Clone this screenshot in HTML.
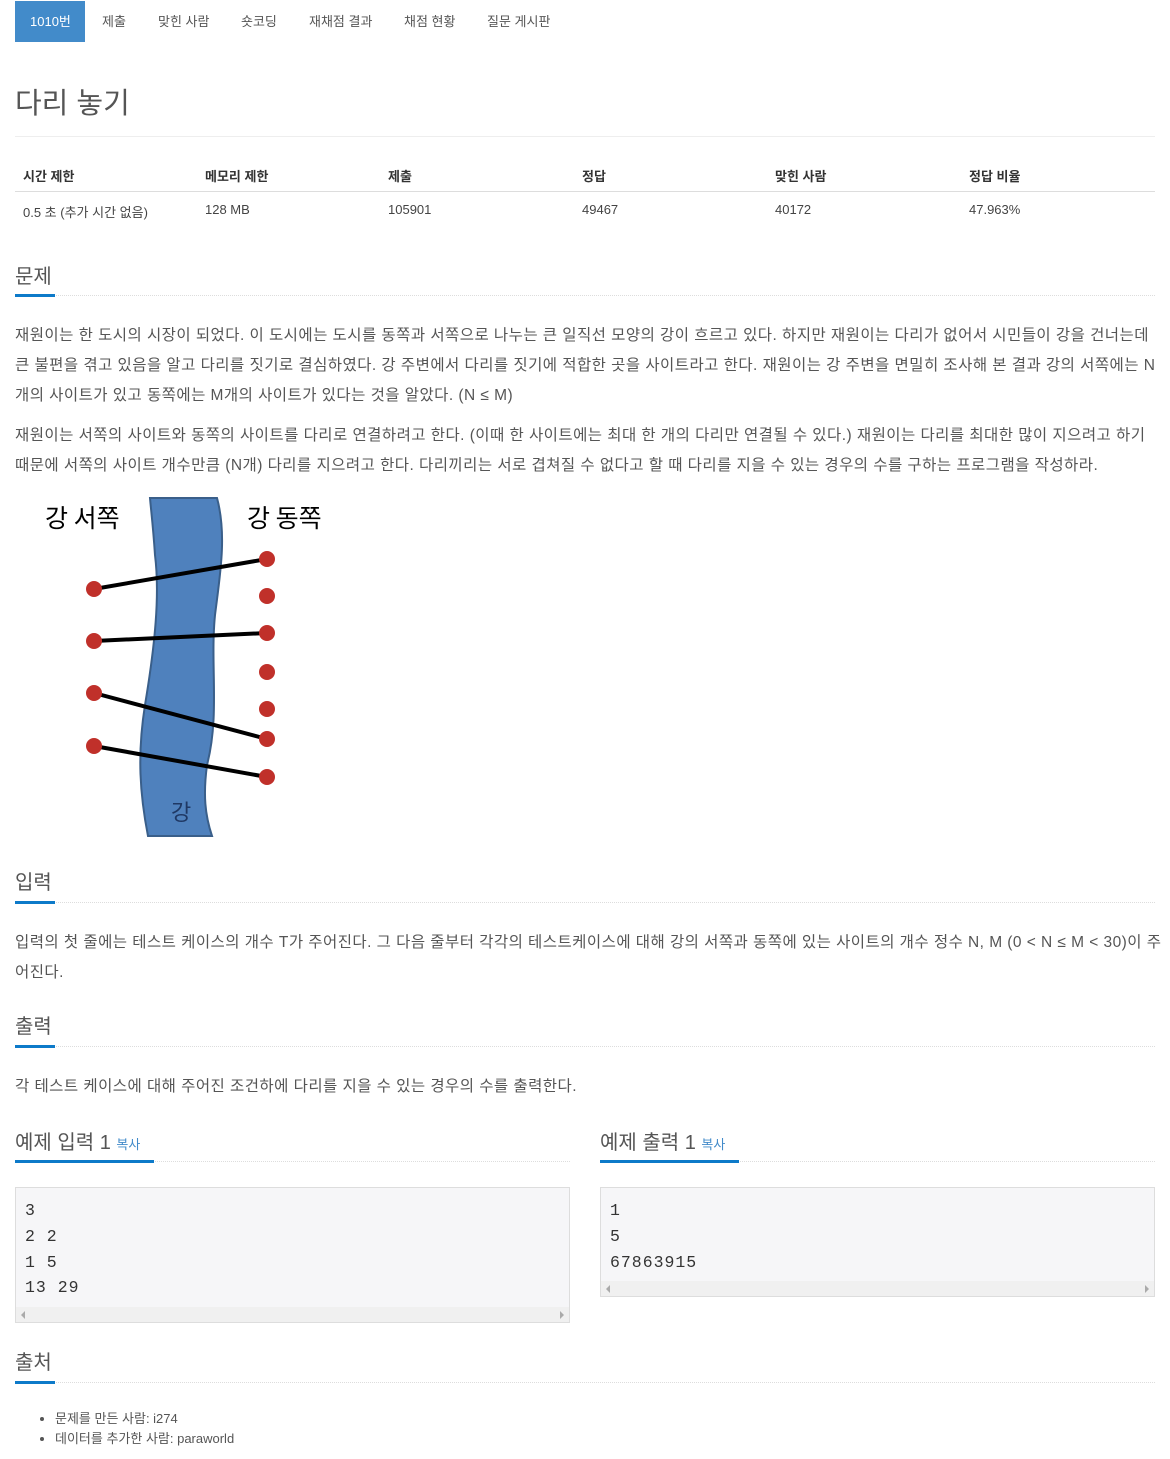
<!DOCTYPE html>
<html><head><meta charset="utf-8"><style>
*{margin:0;padding:0;box-sizing:border-box}
body{width:1170px;height:1459px;background:#fff;font-family:"Liberation Sans","Noto Sans CJK KR",sans-serif;color:#333;position:relative;overflow:hidden}
.a{position:absolute}
.nav span{position:absolute;top:11px;font-size:13px;color:#555}
.h2{font-size:20px;color:#555}
.uline{position:absolute;height:3px;background:#0d7ac9}
.dot{position:absolute;left:15px;right:15px;border-top:1px dotted #ddd}
p.t{position:absolute;left:15px;width:1145px;font-size:15.5px;line-height:30px;color:#555;letter-spacing:0.45px}
.th{font-size:13px;font-weight:bold;color:#333;position:absolute;top:166px}
.td{font-size:13px;color:#444;position:absolute;top:202px}
pre{position:absolute;background:#f6f6f8;border:1px solid #ddd;font-family:"Liberation Mono","DejaVu Sans Mono",monospace;font-size:16.5px;line-height:25.8px;color:#333;padding:10px 9px;letter-spacing:1px}
.sb{position:absolute;left:0;right:0;bottom:0;height:15px;background:#f0f0f0}
.sb:before{content:"";position:absolute;left:5px;top:4px;border-right:4px solid #aaa;border-top:4px solid transparent;border-bottom:4px solid transparent}
.sb:after{content:"";position:absolute;right:5px;top:4px;border-left:4px solid #aaa;border-top:4px solid transparent;border-bottom:4px solid transparent}
</style></head><body>
<div class="a" style="left:15px;top:1px;width:70px;height:41px;background:#428bca"></div>
<div class="nav">
<span style="left:30px;color:#fff">1010번</span>
<span style="left:102px">제출</span>
<span style="left:158px">맞힌 사람</span>
<span style="left:241px">숏코딩</span>
<span style="left:309px">재채점 결과</span>
<span style="left:404px">채점 현황</span>
<span style="left:487px">질문 게시판</span>
</div>
<div class="a" style="left:15px;top:80px;font-size:29px;color:#555">다리 놓기</div>
<div class="a" style="left:15px;right:15px;top:136px;border-top:1px solid #eee"></div>
<span class="th" style="left:23px">시간 제한</span><span class="th" style="left:205px">메모리 제한</span><span class="th" style="left:388px">제출</span><span class="th" style="left:582px">정답</span><span class="th" style="left:775px">맞힌 사람</span><span class="th" style="left:969px">정답 비율</span>
<div class="a" style="left:15px;right:15px;top:191px;border-top:1px solid #ddd"></div>
<span class="td" style="left:23px">0.5 초 (추가 시간 없음)</span><span class="td" style="left:205px">128 MB</span><span class="td" style="left:388px">105901</span><span class="td" style="left:582px">49467</span><span class="td" style="left:775px">40172</span><span class="td" style="left:969px">47.963%</span>

<div class="a h2" style="left:15px;top:260px">문제</div>
<div class="dot" style="top:295px"></div><div class="uline" style="left:15px;width:40px;top:294px"></div>
<p class="t" style="top:321px">재원이는 한 도시의 시장이 되었다. 이 도시에는 도시를 동쪽과 서쪽으로 나누는 큰 일직선 모양의 강이 흐르고 있다. 하지만 재원이는 다리가 없어서 시민들이 강을 건너는데 큰 불편을 겪고 있음을 알고 다리를 짓기로 결심하였다. 강 주변에서 다리를 짓기에 적합한 곳을 사이트라고 한다. 재원이는 강 주변을 면밀히 조사해 본 결과 강의 서쪽에는 N개의 사이트가 있고 동쪽에는 M개의 사이트가 있다는 것을 알았다. (N ≤ M)</p>
<p class="t" style="top:421px">재원이는 서쪽의 사이트와 동쪽의 사이트를 다리로 연결하려고 한다. (이때 한 사이트에는 최대 한 개의 다리만 연결될 수 있다.) 재원이는 다리를 최대한 많이 지으려고 하기 때문에 서쪽의 사이트 개수만큼 (N개) 다리를 지으려고 한다. 다리끼리는 서로 겹쳐질 수 없다고 할 때 다리를 지을 수 있는 경우의 수를 구하는 프로그램을 작성하라.</p>

<svg class="a" style="left:15px;top:495px" width="320" height="345" viewBox="0 0 320 345">
<path d="M135 3 L202 3 C212 40 205 80 200 120 C195 170 205 220 192 270 C188 300 190 320 197 341 L133 341 C125 300 122 260 130 210 C140 150 145 100 140 60 C138 30 136 15 135 3Z" fill="#4f81bd" stroke="#3a5f8a" stroke-width="2"/>
<text x="30" y="32" font-size="25" fill="#000" font-family="Noto Sans CJK KR,sans-serif">강 서쪽</text>
<text x="232" y="32" font-size="25" fill="#000" font-family="Noto Sans CJK KR,sans-serif">강 동쪽</text>
<text x="156" y="325" font-size="22" fill="#1f3864" font-family="Noto Sans CJK KR,sans-serif">강</text>
<g stroke="#000" stroke-width="4"><line x1="79" y1="94" x2="252" y2="64"/><line x1="79" y1="146" x2="252" y2="138"/><line x1="79" y1="198" x2="252" y2="244"/><line x1="79" y1="251" x2="252" y2="282"/></g>
<g fill="#c0302a"><circle cx="79" cy="94" r="8"/><circle cx="79" cy="146" r="8"/><circle cx="79" cy="198" r="8"/><circle cx="79" cy="251" r="8"/><circle cx="252" cy="64" r="8"/><circle cx="252" cy="101" r="8"/><circle cx="252" cy="138" r="8"/><circle cx="252" cy="177" r="8"/><circle cx="252" cy="214" r="8"/><circle cx="252" cy="244" r="8"/><circle cx="252" cy="282" r="8"/></g>
</svg>

<div class="a h2" style="left:15px;top:866px">입력</div>
<div class="dot" style="top:902px"></div><div class="uline" style="left:15px;width:40px;top:901px"></div>
<p class="t" style="top:928px;width:1150px">입력의 첫 줄에는 테스트 케이스의 개수 T가 주어진다. 그 다음 줄부터 각각의 테스트케이스에 대해 강의 서쪽과 동쪽에 있는 사이트의 개수 정수 N, M (0 &lt; N ≤ M &lt; 30)이 주<br>어진다.</p>

<div class="a h2" style="left:15px;top:1010px">출력</div>
<div class="dot" style="top:1046px"></div><div class="uline" style="left:15px;width:40px;top:1045px"></div>
<p class="t" style="top:1072px">각 테스트 케이스에 대해 주어진 조건하에 다리를 지을 수 있는 경우의 수를 출력한다.</p>

<div class="a h2" style="left:15px;top:1126px">예제 입력 1 <span style="font-size:13px;color:#428bca">복사</span></div>
<div class="a" style="left:15px;width:555px;top:1161px;border-top:1px dotted #ddd"></div><div class="uline" style="left:15px;width:139px;top:1160px"></div>
<pre style="left:15px;top:1187px;width:555px;height:136px">3
2 2
1 5
13 29<div class="sb"></div></pre>

<div class="a h2" style="left:600px;top:1126px">예제 출력 1 <span style="font-size:13px;color:#428bca">복사</span></div>
<div class="a" style="left:600px;width:555px;top:1161px;border-top:1px dotted #ddd"></div><div class="uline" style="left:600px;width:139px;top:1160px"></div>
<pre style="left:600px;top:1187px;width:555px;height:110px">1
5
67863915<div class="sb"></div></pre>

<div class="a h2" style="left:15px;top:1346px">출처</div>
<div class="dot" style="top:1382px"></div><div class="uline" style="left:15px;width:40px;top:1381px"></div>
<ul class="a" style="left:55px;top:1409px;font-size:13px;line-height:20px;color:#555">
<li>문제를 만든 사람: i274</li>
<li>데이터를 추가한 사람: paraworld</li>
</ul>
</body></html>
